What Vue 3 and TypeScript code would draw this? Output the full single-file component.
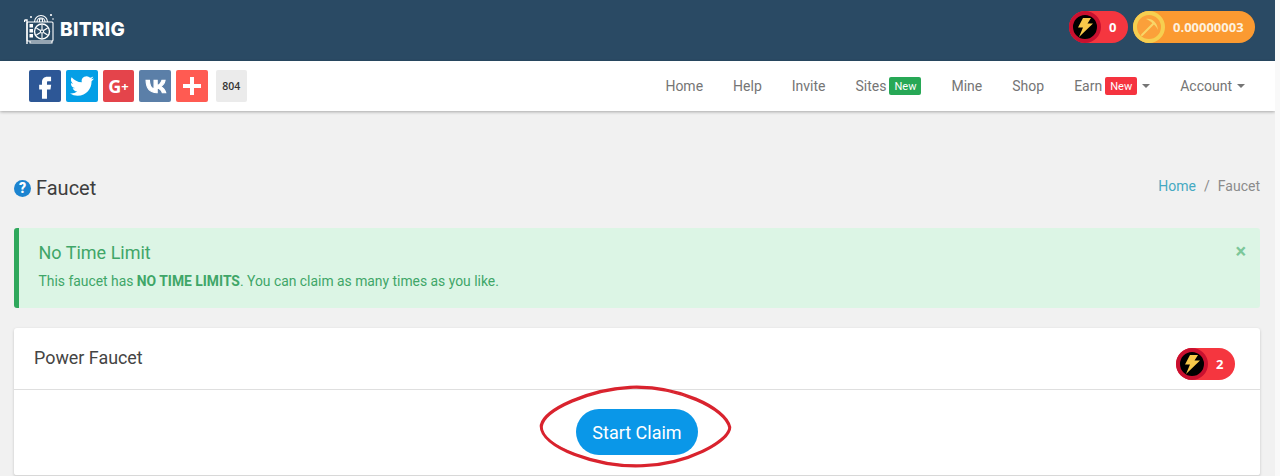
<script setup lang="ts">
type NavItem = { label: string; badge?: "green" | "red"; caret?: boolean };

const navItems: NavItem[] = [
  { label: "Home" },
  { label: "Help" },
  { label: "Invite" },
  { label: "Sites", badge: "green" },
  { label: "Mine" },
  { label: "Shop" },
  { label: "Earn", badge: "red", caret: true },
  { label: "Account", caret: true },
];
</script>

<template>
  <div class="page">
    <header class="topbar">
      <div class="brand">
        <svg class="brand__icon" viewBox="0 0 32 32" fill="none" stroke="#fff" stroke-width="1.1">
          <path d="M0.5 7h2.500v24M0.5 7v2" stroke-width="1.4" />
          <rect x="3" y="9" width="26" height="19" rx="1" />
          <path d="M6 28v2h22v-2" />
          <circle cx="18" cy="18.5" r="7.5" stroke-width="1.4" />
          <circle cx="18" cy="18.5" r="1.6" />
          <path d="M18 12v4.500M23.600 15l-4 2.500M23.600 22l-4-2.500M18 25v-4.500M12.400 22l4-2.500M12.400 15l4 2.500" />
          <rect x="5.5" y="11" width="3.5" height="3.5" fill="#fff" stroke="none" />
          <rect x="5.5" y="16" width="3.5" height="3.5" fill="#fff" stroke="none" />
          <rect x="5.5" y="21" width="3.5" height="3.5" fill="#fff" stroke="none" />
          <path d="M10.500 9a6.500 6.500 0 0 1 13 0M13 9a4 4 0 0 1 8 0" />
          <path d="M15.500 9V6h3v3" />
          <circle cx="7" cy="4" r="1" fill="#fff" stroke="none" />
          <circle cx="27" cy="2" r="1.1" fill="#fff" stroke="none" />
          <circle cx="29" cy="6" r="0.8" fill="#fff" stroke="none" />
        </svg>
        <span class="brand__name">BITRIG</span>
      </div>
      <div class="pills">
        <div class="pill pill--power">
          <svg class="pill__icon" viewBox="0 0 32 32">
            <circle cx="16" cy="16" r="14" fill="#000" stroke="#c9102f" stroke-width="4" />
            <path d="M14 7h8l-3.500 5.500H24L10 26l4-9.500H9z" fill="#f7c84a" />
          </svg>
          <span class="pill__value pill__value--power">0</span>
        </div>
        <div class="pill pill--mine">
          <svg class="pill__icon" viewBox="0 0 32 32">
            <circle cx="16" cy="16" r="14" fill="#fba03a" stroke="#f6cf50" stroke-width="4" />
            <path d="M9 24L20 13" stroke="#f8d668" stroke-width="2" stroke-linecap="round" />
            <path d="M13 8c6-1 11 3 12 11c-1.500-3-3.500-5.500-5.500-6.500C18 10.500 15.500 9 13 8z" fill="#f8d668" />
          </svg>
          <span class="pill__value pill__value--mine">0.00000003</span>
        </div>
      </div>
    </header>

    <nav class="navbar">
      <div class="share">
        <a class="share__btn share__btn--fb">
          <svg viewBox="0 0 24 24" width="28" height="28"><path fill="#fff" d="M14.200 8h3V4h-3.100c-3 0-4.700 1.900-4.700 4.700V11H7v4h2.400v8h4.300v-8h3l.6-4h-3.600V8.900c0-.6.300-.9.500-.9z" /></svg>
        </a>
        <a class="share__btn share__btn--tw">
          <svg viewBox="0 0 24 24" width="24" height="24"><path fill="#fff" d="M23.953 4.570a10 10 0 01-2.825.775 4.958 4.958 0 002.163-2.723c-.951.555-2.005.959-3.127 1.184a4.920 4.920 0 00-8.384 4.482C7.690 8.095 4.067 6.130 1.640 3.162a4.822 4.822 0 00-.666 2.475c0 1.710.870 3.213 2.188 4.096a4.904 4.904 0 01-2.228-.616v.060a4.923 4.923 0 003.946 4.827 4.996 4.996 0 01-2.212.085 4.936 4.936 0 004.604 3.417 9.867 9.867 0 01-6.102 2.105c-.390 0-.779-.023-1.170-.067a13.995 13.995 0 007.557 2.209c9.053 0 13.998-7.496 13.998-13.985 0-.210 0-.420-.015-.630A9.935 9.935 0 0024 4.590z" /></svg>
        </a>
        <a class="share__btn share__btn--gp">G<span class="share__plus">+</span></a>
        <a class="share__btn share__btn--vk">
          <svg viewBox="0 0 24 24" width="27" height="27"><path fill="#fff" stroke="#fff" stroke-width="1" d="M13.200 17.500c-6 0-9.400-4.100-9.600-11h3c.1 5 2.300 7.200 4.100 7.600V6.500h2.800v4.400c1.700-.2 3.500-2.200 4.200-4.400h2.800c-.5 2.700-2.500 4.700-3.900 5.500 1.400.7 3.700 2.400 4.500 5.500h-3.100c-.7-2.100-2.300-3.700-4.500-3.900v3.900z" /></svg>
        </a>
        <a class="share__btn share__btn--plus">
          <svg viewBox="0 0 24 24" width="24" height="24"><path fill="#fff" d="M10 3h4v7h7v4h-7v7h-4v-7H3v-4h7z" /></svg>
        </a>
        <span class="share__count">804</span>
      </div>
      <ul class="menu">
        <li v-for="item in navItems" :key="item.label" class="menu__item">
          {{ item.label }}
          <span v-if="item.badge" class="badge" :class="`badge--${item.badge}`">New</span>
          <span v-if="item.caret" class="caret"></span>
        </li>
      </ul>
    </nav>

    <main class="content">
      <div class="title-row">
        <h1 class="title"><span class="title__help">?</span>Faucet</h1>
        <div class="crumbs">
          <a class="crumbs__link">Home</a>
          <span class="crumbs__sep">/</span>
          <span>Faucet</span>
        </div>
      </div>

      <section class="alert">
        <span class="alert__close">×</span>
        <h2 class="alert__title">No Time Limit</h2>
        <p class="alert__text">This faucet has <strong>NO TIME LIMITS</strong>. You can claim as many times as you like.</p>
      </section>

      <section class="card">
        <div class="card__header">
          <h2 class="card__title">Power Faucet</h2>
          <div class="pill pill--power pill--card">
            <svg class="pill__icon" viewBox="0 0 32 32">
              <circle cx="16" cy="16" r="14" fill="#000" stroke="#c9102f" stroke-width="4" />
              <path d="M14 7h8l-3.500 5.500H24L10 26l4-9.500H9z" fill="#f7c84a" />
            </svg>
            <span class="pill__value pill__value--power">2</span>
          </div>
        </div>
        <div class="card__body">
          <div class="claim">
            <button type="button" class="claim__btn">Start Claim</button>
            <svg class="claim__ring" viewBox="0 0 200 90" fill="none" stroke="#d9232e" stroke-linejoin="round">
              <path stroke-width="2.500" d="M4 40C8 24 52 4 93 2c47-2 95 20 100 40 1 14-43 38-87 39C60 83 2 62 4 40z" />
              <path stroke-width="1.500" d="M5 42C7 25 54 5 96 3c44-1 93 21 96 40-2 13-42 36-88 37C62 81 5 62 5 42z" />
            </svg>
          </div>
        </div>
      </section>
    </main>
  </div>
</template>

<style>
html,
body {
  margin: 0;
  height: 476px;
  overflow: hidden;
  background: #f9f9f9;
}
</style>

<style scoped>
.page {
  width: 1275px;
  height: 476px;
  overflow: hidden;
  background: #f1f1f1;
  font-family: Roboto, "Liberation Sans", sans-serif;
  color: #3e3e3e;
}

.topbar {
  height: 61px;
  box-sizing: border-box;
  display: flex;
  justify-content: space-between;
  align-items: center;
  padding: 0 20px 3px 24px;
  background: #2a4a64;
}

.brand {
  display: flex;
  align-items: center;
  gap: 4px;
}

.brand__icon {
  width: 32px;
  height: 32px;
}

.brand__name {
  font-family: Inter, sans-serif;
  font-size: 19px;
  font-weight: 800;
  letter-spacing: 0.3px;
  color: #fff;
}

.pills {
  display: flex;
  gap: 5px;
  margin-bottom: 4px;
}

.pill {
  height: 32px;
  display: flex;
  align-items: center;
  border-radius: 16px;
}

.pill--power {
  width: 59px;
  background: #f5363f;
}

.pill--mine {
  width: 122px;
  background: #fb9a31;
}

.pill--card {
  width: 59px;
  margin-top: 10px;
}

.pill__icon {
  width: 32px;
  height: 32px;
  flex: none;
}

.pill__value {
  font-family: "Open Sans", sans-serif;
  font-size: 13px;
  font-weight: 700;
  color: #fff;
}

.pill__value--power {
  margin-left: 8px;
}

.pill__value--mine {
  margin-left: 8px;
  color: #fdf1df;
}

.navbar {
  height: 50px;
  box-sizing: border-box;
  display: flex;
  justify-content: space-between;
  align-items: center;
  padding: 0 30px 0 29px;
  background: #fff;
  box-shadow: 0 1px 3px rgba(0, 0, 0, 0.3);
  position: relative;
}

.share {
  display: flex;
  align-items: center;
  gap: 5px;
}

.share__btn {
  width: 31.75px;
  height: 32px;
  display: flex;
  align-items: center;
  justify-content: center;
  border-radius: 2px;
}

.share__btn--fb {
  background: #2d5796;
}

.share__btn--tw {
  background: #049fe6;
}

.share__btn--gp {
  background: #e4444b;
  color: #fff;
  font-family: "Open Sans", sans-serif;
  font-size: 18px;
  font-weight: 700;
}

.share__plus {
  font-size: 13px;
}

.share__btn--vk {
  background: #5b7fa8;
}

.share__btn--plus {
  background: #ff5b52;
}

.share__count {
  width: 31px;
  height: 32px;
  margin-left: 3px;
  display: flex;
  align-items: center;
  justify-content: center;
  border-radius: 2px;
  background: #ebebeb;
  font-family: "Open Sans", sans-serif;
  font-size: 10.5px;
  font-weight: 600;
  color: #333;
}

.menu {
  display: flex;
  gap: 30px;
  margin: 0;
  padding: 0;
  list-style: none;
}

.menu__item {
  display: flex;
  align-items: center;
  font-size: 14px;
  color: #757575;
}

.badge {
  width: 32px;
  height: 18px;
  margin-left: 3px;
  display: flex;
  align-items: center;
  justify-content: center;
  border-radius: 2px;
  font-size: 11px;
  color: #fff;
}

.badge--green {
  background: #27a856;
}

.badge--red {
  background: #f5333f;
}

.caret {
  width: 0;
  height: 0;
  margin-left: 5px;
  border: 4px solid transparent;
  border-top-color: #757575;
  border-bottom: 0;
}

.content {
  padding: 0 15px 0 14px;
}

.title-row {
  height: 117px;
  box-sizing: border-box;
  padding-top: 65px;
  display: flex;
  justify-content: space-between;
  align-items: flex-start;
}

.title {
  display: flex;
  align-items: center;
  gap: 5px;
  margin: 0;
  font-size: 20px;
  font-weight: 400;
  line-height: 24px;
}

.title__help {
  width: 17px;
  height: 17px;
  display: flex;
  align-items: center;
  justify-content: center;
  border-radius: 50%;
  background: #1c84d0;
  font-size: 14px;
  font-weight: 900;
  color: #fff;
}

.crumbs {
  display: flex;
  gap: 8px;
  font-size: 14px;
  line-height: 20px;
  color: #8b8b8b;
}

.crumbs__link {
  color: #45a9c2;
}

.alert {
  position: relative;
  height: 80px;
  box-sizing: border-box;
  padding: 14px 20px 14px 19.5px;
  border-left: 5px solid #2fa85c;
  border-radius: 3px;
  background: #dcf5e5;
  color: #3fa668;
}

.alert__close {
  position: absolute;
  top: 11px;
  right: 14px;
  font-size: 20px;
  font-weight: 700;
  line-height: 24px;
  color: #7cc79a;
}

.alert__title {
  margin: 0 0 8px;
  font-size: 18px;
  font-weight: 400;
  line-height: 21px;
}

.alert__text {
  margin: 0;
  font-size: 13.88px;
  line-height: 20px;
}

.alert__text strong {
  font-weight: 700;
}

.card {
  height: 148px;
  box-sizing: border-box;
  margin-top: 20px;
  border-bottom: 1px solid #d8d8d8;
  border-radius: 3px;
  background: #fff;
  box-shadow: 0 1px 3px rgba(0, 0, 0, 0.18);
}

.card__header {
  height: 62px;
  box-sizing: border-box;
  display: flex;
  justify-content: space-between;
  align-items: center;
  padding: 0 25px 0 20px;
  border-bottom: 1px solid #dfdfdf;
}

.card__title {
  margin: 0 0 2px;
  font-size: 17.9px;
  font-weight: 400;
  color: #444;
}

.card__body {
  display: flex;
  justify-content: center;
  padding-top: 19px;
}

.claim {
  position: relative;
}

.claim__btn {
  width: 122px;
  height: 46px;
  border: none;
  border-radius: 23px;
  background: #0a97e8;
  font-family: Roboto, sans-serif;
  font-size: 18px;
  color: #fff;
}

.claim__ring {
  position: absolute;
  left: -39px;
  top: -24px;
  width: 200px;
  height: 90px;
  pointer-events: none;
}
</style>
